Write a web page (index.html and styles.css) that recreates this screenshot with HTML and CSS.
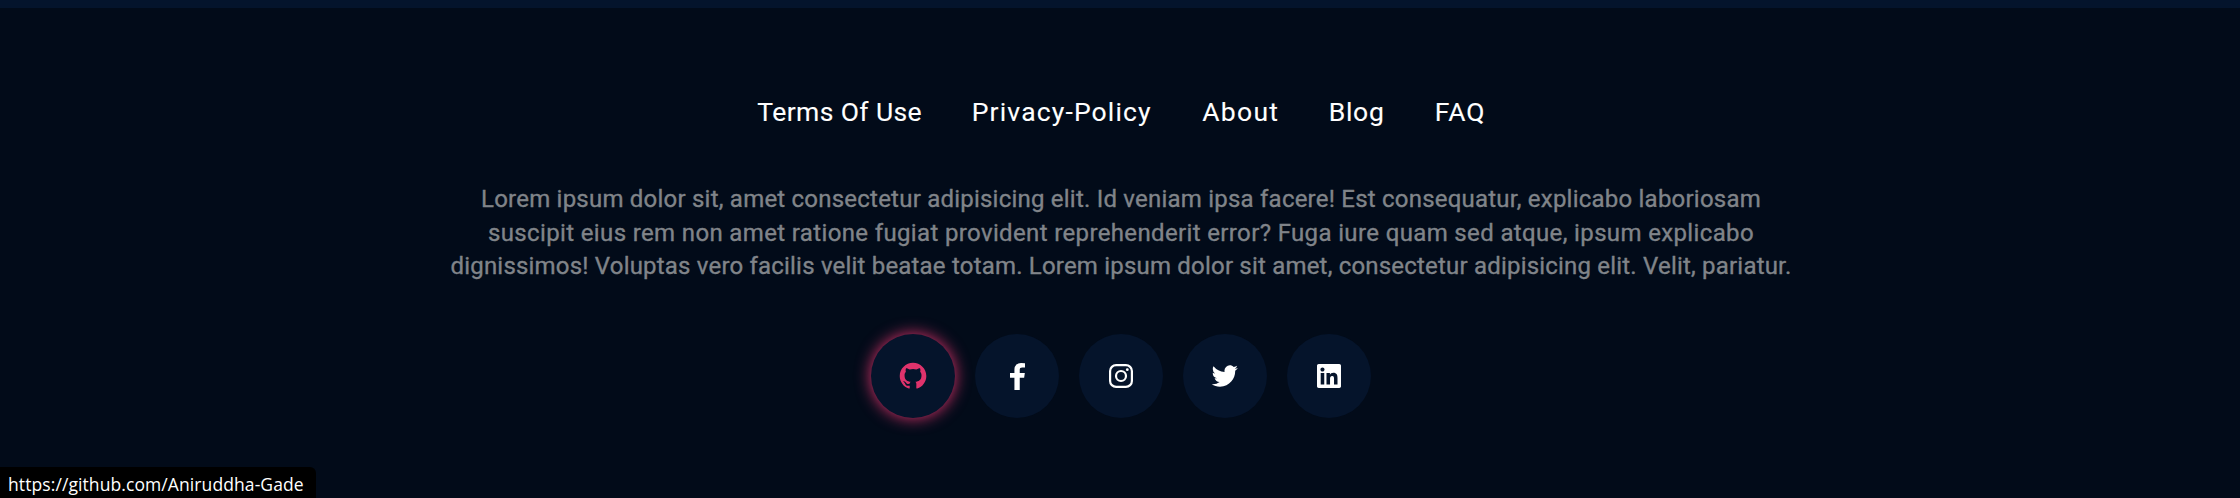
FILE: index.html
```html
<!DOCTYPE html>
<html lang="en">
<head>
<meta charset="utf-8">
<title>Footer</title>
<link rel="stylesheet" href="styles.css">
</head>
<body>
<footer class="footer">
  <nav class="links">
    <a class="link terms">Terms Of Use</a>
    <a class="link privacy">Privacy-Policy</a>
    <a class="link about">About</a>
    <a class="link blog">Blog</a>
    <a class="link faq">FAQ</a>
  </nav>
  <p class="copy">
    <span class="line first">Lorem ipsum dolor sit, amet consectetur adipisicing elit. Id veniam ipsa facere! Est consequatur, explicabo laboriosam</span>
    <span class="line second">suscipit eius rem non amet ratione fugiat provident reprehenderit error? Fuga iure quam sed atque, ipsum explicabo</span>
    <span class="line third">dignissimos! Voluptas vero facilis velit beatae totam. Lorem ipsum dolor sit amet, consectetur adipisicing elit. Velit, pariatur.</span>
  </p>
  <div class="social">
    <a class="circle active" aria-label="GitHub"><svg class="icon" viewBox="0 0 24 24"><path d="M12.026 2c-5.509 0-9.974 4.465-9.974 9.974 0 4.406 2.857 8.145 6.821 9.465.499.09.679-.217.679-.481 0-.237-.008-.865-.011-1.696-2.775.602-3.361-1.338-3.361-1.338-.452-1.152-1.107-1.459-1.107-1.459-.905-.619.069-.605.069-.605 1.002.07 1.527 1.028 1.527 1.028.89 1.524 2.336 1.084 2.902.829.091-.645.351-1.085.635-1.334-2.214-.251-4.542-1.107-4.542-4.93 0-1.087.389-1.979 1.024-2.675-.101-.253-.446-1.268.099-2.640 0 0 .837-.269 2.742 1.021a9.582 9.582 0 0 1 2.496-.336 9.554 9.554 0 0 1 2.496.336c1.906-1.291 2.742-1.021 2.742-1.021.545 1.372.203 2.387.099 2.640.64.696 1.024 1.587 1.024 2.675 0 3.833-2.330 4.675-4.552 4.922.355.308.675.916.675 1.846 0 1.334-.012 2.410-.012 2.737 0 .267.178.577.687.479C19.146 20.115 22 16.379 22 11.974 22 6.465 17.535 2 12.026 2z"/></svg></a>
    <a class="circle" aria-label="Facebook"><svg class="icon-f" viewBox="479 0 864 1664" preserveAspectRatio="none"><path d="M1343 12v264h-157q-86 0-116 36t-30 108v189h293l-39 296h-254v759h-306v-759h-255v-296h255v-218q0-186 104-288.5T1115 0q147 0 228 12z"/></svg></a>
    <a class="circle" aria-label="Instagram"><svg class="icon-square" viewBox="0 0 24 24"><rect class="stroke" x="1.1" y="1.1" width="21.8" height="21.8" rx="6"/><circle class="stroke" cx="12" cy="12" r="5"/><circle cx="18.3" cy="5.7" r="1.4"/></svg></a>
    <a class="circle" aria-label="Twitter"><svg class="icon" viewBox="0 0 24 24"><path d="M19.633 7.997c.013.175.013.349.013.523 0 5.325-4.053 11.461-11.46 11.461-2.282 0-4.402-.661-6.186-1.809.324.037.636.05.973.05a8.07 8.07 0 0 0 5.001-1.721 4.036 4.036 0 0 1-3.767-2.793c.249.037.499.062.761.062.361 0 .724-.05 1.061-.137a4.027 4.027 0 0 1-3.23-3.953v-.05c.537.299 1.16.486 1.82.511a4.022 4.022 0 0 1-1.796-3.354c0-.748.199-1.434.548-2.032a11.457 11.457 0 0 0 8.306 4.215c-.062-.3-.1-.611-.1-.923a4.026 4.026 0 0 1 4.028-4.028c1.16 0 2.207.486 2.943 1.272a7.957 7.957 0 0 0 2.556-.973 4.02 4.02 0 0 1-1.771 2.22 8.073 8.073 0 0 0 2.319-.624 8.645 8.645 0 0 1-2.019 2.083z"/></svg></a>
    <a class="circle" aria-label="LinkedIn"><svg class="icon-square" viewBox="0 32 448 448"><path d="M416 32H31.9C14.3 32 0 46.5 0 64.3v383.4C0 465.5 14.3 480 31.9 480H416c17.6 0 32-14.5 32-32.3V64.3c0-17.8-14.4-32.3-32-32.3zM135.4 416H69V202.2h66.5V416zm-33.2-243c-21.3 0-38.5-17.3-38.5-38.5S80.9 96 102.2 96c21.2 0 38.5 17.3 38.5 38.5 0 21.3-17.2 38.5-38.5 38.5zm282.1 243h-66.4V312c0-24.8-.5-56.7-34.5-56.7-34.6 0-39.9 27-39.9 54.9V416h-66.4V202.2h63.7v29.2h.9c8.9-16.8 30.6-34.5 62.2-34.5 66.5 0 78.9 43.8 78.9 100.9V416z"/></svg></a>
  </div>
</footer>
<div class="status">https://github.com/Aniruddha-Gade</div>
</body>
</html>
```
FILE: styles.css
```css
* { box-sizing: border-box; }
body { margin: 0; height: 498px; overflow: hidden; background: #020b19; color: #fff; font-family: Roboto, "Liberation Sans", sans-serif; }
.footer { height: 498px; border-top: 8px solid #04142c; padding: 88px 0 0 2px; display: flex; flex-direction: column; align-items: center; }
.links { display: grid; grid-template-columns: 164.5px 180.5px 76.5px 56px 52px; gap: 50px; height: 32px; margin-left: 2px; line-height: 32px; font-size: 26.5px; -webkit-text-stroke: 0.1px currentColor; }
.link { white-space: nowrap; }
.terms { letter-spacing: 0.4px; }
.privacy { letter-spacing: 1.15px; }
.about { letter-spacing: 1.3px; }
.blog { letter-spacing: 0.7px; }
.faq { letter-spacing: 1px; }
.copy { margin: 55px 0 0; display: flex; flex-direction: column; align-items: center; font-size: 24px; line-height: 33.6px; color: #808489; -webkit-text-stroke: 0.35px currentColor; }
.line { white-space: nowrap; }
.first { letter-spacing: 0.22px; }
.second { letter-spacing: 0.36px; }
.third { letter-spacing: 0.195px; }
.social { margin-top: 50px; display: flex; gap: 20px; }
.circle { width: 84px; height: 84px; padding-top: 1px; border-radius: 50%; background: #05142b; display: flex; align-items: center; justify-content: center; }
.circle svg { fill: currentColor; }
.active { color: #e0336c; box-shadow: 0 0 16px #e0336c; }
.icon { width: 32px; height: 32px; }
.icon-f { width: 15px; height: 27px; }
.icon-square { width: 24px; height: 24px; }
.circle .stroke { fill: none; stroke: currentColor; stroke-width: 2.2; }
.status { position: absolute; left: 0; bottom: 0; width: 316px; height: 31px; background: #000; border-top-right-radius: 6px; padding-left: 8px; font-family: "Open Sans", sans-serif; font-size: 17.5px; letter-spacing: 0.09px; line-height: 35px; white-space: nowrap; }
```
